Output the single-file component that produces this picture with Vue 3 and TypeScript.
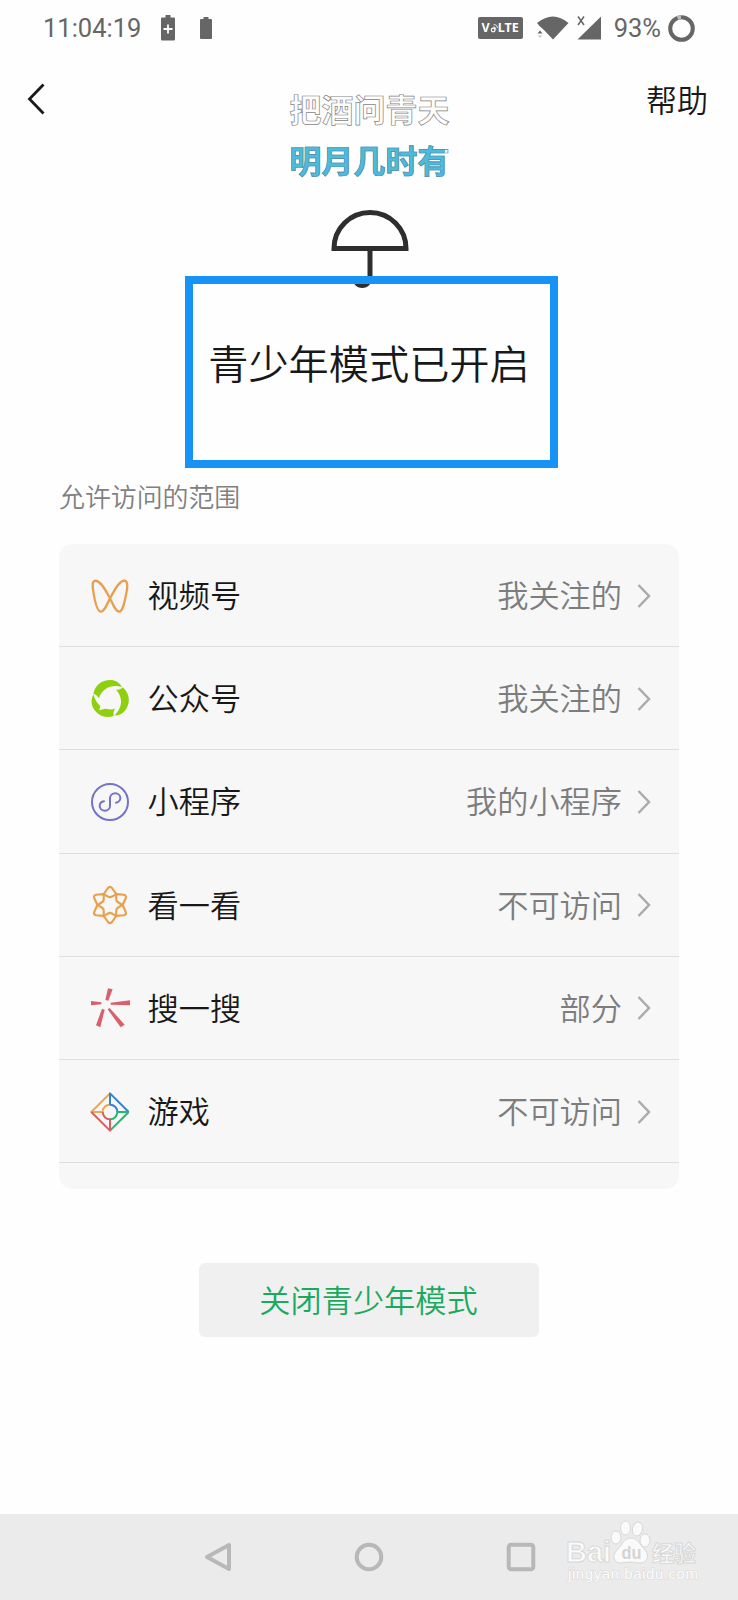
<script setup lang="ts">
type IconName = 'channels' | 'accounts' | 'mini' | 'look' | 'search' | 'games'

interface AccessRow {
  icon: IconName
  label: string
  value: string
}

const rows: AccessRow[] = [
  { icon: 'channels', label: '视频号', value: '我关注的' },
  { icon: 'accounts', label: '公众号', value: '我关注的' },
  { icon: 'mini', label: '小程序', value: '我的小程序' },
  { icon: 'look', label: '看一看', value: '不可访问' },
  { icon: 'search', label: '搜一搜', value: '部分' },
  { icon: 'games', label: '游戏', value: '不可访问' },
]

const sixth = [0, 60, 120, 180, 240, 300]
const third = [0, 120, 240]
</script>

<template>
  <div class="screen">
    <div class="status">
      <span class="clock">11:04:19</span>
      <svg class="bat-plus" viewBox="0 0 14 26" width="14" height="26">
        <path d="M4.500 0h5v2.500H13a1 1 0 0 1 1 1V24.500a1 1 0 0 1-1 1H1a1 1 0 0 1-1-1V3.500a1 1 0 0 1 1-1h3.500z" fill="#666" />
        <path d="M7 9.500v9M2.500 14h9" stroke="#fff" stroke-width="1.800" />
      </svg>
      <svg class="bat" viewBox="0 0 12 22" width="12" height="22">
        <path d="M3.500 0h5v2H11a1 1 0 0 1 1 1V21a1 1 0 0 1-1 1H1a1 1 0 0 1-1-1V3a1 1 0 0 1 1-1h2.500z" fill="#666" />
      </svg>
      <span class="spacer"></span>
      <span class="volte">V<svg viewBox="0 0 10 12" width="8" height="12"><circle cx="4" cy="8.500" r="2.300" fill="none" stroke="#fff" stroke-width="1.600" /><path d="M4 4.500Q7 4.500 7.500 8M4.500 1.500Q9 1.500 9.500 6" fill="none" stroke="#fff" stroke-width="1.100" /></svg>LTE</span>
      <svg class="wifi" viewBox="0 0 32 24" width="32" height="24">
        <path d="M0 7Q16-6 31.500 7L16 23.500L7.500 14.500L3 10.500z" fill="#666" />
        <path d="M-.500 18V13L3 11L7 15V18z" fill="#fefefe" />
        <path d="M.500 17.500L3 14.500L5.500 17.500z" fill="#666" />
        <path d="M.500 19.500L3 22L5.500 19.500z" fill="#ccc" />
      </svg>
      <svg class="signal" viewBox="0 0 24 24" width="24" height="24">
        <path d="M24 .500V23.500H.500z" fill="#666" />
        <path d="M1 .500L7 9M7 .500L1 9" stroke="#666" stroke-width="1.500" />
      </svg>
      <span class="percent">93%</span>
      <svg class="ring" viewBox="0 0 27 27" width="27" height="27">
        <circle cx="13.500" cy="13.500" r="11.300" fill="none" stroke="#666" stroke-width="4" />
        <path d="M9.500 2.900A11.300 11.300 0 0 1 13 2.200" fill="none" stroke="#bbb" stroke-width="4" />
      </svg>
    </div>

    <header class="top">
      <svg class="back" viewBox="0 0 18 32" width="18" height="32">
        <path d="M16.500 1.500L2.500 16L16.500 30.500" fill="none" stroke="#1a1a1a" stroke-width="2.800" />
      </svg>
      <div class="lyrics">
        <div class="line plain">把酒问青天</div>
        <div class="line sung">明月几时有</div>
      </div>
      <span class="help">帮助</span>
    </header>

    <section class="hero">
      <svg class="umbrella" viewBox="0 0 78 80" width="78" height="80">
        <path d="M3 39.500A36 36 0 0 1 75 39.500z" fill="none" stroke="#2e2e2e" stroke-width="5" />
        <path d="M39 42V68A7.750 8.500 0 0 1 23.500 68" fill="none" stroke="#2e2e2e" stroke-width="5" />
      </svg>
      <div class="frame"><h1>青少年模式已开启</h1></div>
    </section>

    <p class="caption">允许访问的范围</p>

    <div class="card">
      <div v-for="row in rows" :key="row.label" class="row">
        <svg class="icon" viewBox="0 0 120 120" width="40" height="40">
          <g v-if="row.icon === 'channels'" fill="none" stroke="#e8a04e" stroke-width="7" stroke-linejoin="round">
            <path d="M60 67C49 47 34 16 17 14C7 14 7 26 9 40C13 68 20 107 33 107C43 107 51 85 60 67C71 47 86 16 102 14C112 14 113 26 111 40C106 68 100 107 87 107C77 107 69 85 60 67z" />
          </g>
          <g v-else-if="row.icon === 'accounts'" fill="#8fd00e">
            <path v-for="a in third" :key="a" d="M10 44C16 18 36 3 60 3C76 3 89 11 96 24C66 14 36 27 27 58C23 51 18 47 10 44z" :transform="`rotate(${a} 60 60)`" />
            <path d="M33 72L28 94L50 88z" fill="#f7f7f7" />
          </g>
          <g v-else-if="row.icon === 'mini'" fill="none" stroke="#7572c9" stroke-width="6" stroke-linecap="round">
            <circle cx="60" cy="60" r="54" />
            <path d="M78 62C86 61 91 54 91 48C91 40 84 34 76 34C67 34 60 40 60 49V71C60 80 53 86 45 86C36 86 29 80 29 72C29 65 34 59 42 58" />
          </g>
          <g v-else-if="row.icon === 'look'" fill="none" stroke="#e9a04c" stroke-width="6.500" stroke-linejoin="round">
            <path v-for="a in sixth" :key="a" d="M42 26L54 9Q60 2 66 9L78 26Q76 31 60 37Q44 31 42 26z" :transform="`rotate(${a} 60 60)`" />
          </g>
          <g v-else-if="row.icon === 'search'" fill="#d9606a">
            <path d="M54 1L68 4L55 38L46 36z" />
            <path d="M3 39L34 43V49L3 52z" />
            <path d="M62 44L120 37V52L62 50z" />
            <path d="M36 62L44 65L31 118L18 112z" />
            <path d="M53 64L59 60L104 110L92 118z" />
          </g>
          <g v-else fill="none" stroke-width="6" stroke-linejoin="round">
            <path d="M60 4L4 60H38A22 22 0 0 1 60 38" stroke="#e8a850" />
            <path d="M60 38V4L116 60M60 38A22 22 0 0 1 82 60" stroke="#3482cf" />
            <path d="M116 60L60 116M60 82A22 22 0 0 0 82 60H116" stroke="#25b76e" />
            <path d="M4 60L60 116V82A22 22 0 0 1 38 60" stroke="#dc5c61" />
          </g>
        </svg>
        <span class="label">{{ row.label }}</span>
        <span class="value">{{ row.value }}</span>
        <svg class="chev" viewBox="0 0 14 26" width="14" height="26">
          <path d="M1.500 2L12 13L1.500 24" fill="none" stroke="#ababab" stroke-width="2.500" />
        </svg>
      </div>
    </div>

    <button class="close" type="button">关闭青少年模式</button>

    <nav class="nav">
      <svg viewBox="0 0 30 30" width="30" height="30">
        <path d="M26 3V27L4 15z" fill="none" stroke="#b8b8b8" stroke-width="4" stroke-linejoin="round" />
      </svg>
      <svg viewBox="0 0 30 30" width="30" height="30">
        <circle cx="15" cy="15" r="12.300" fill="none" stroke="#b8b8b8" stroke-width="4" />
      </svg>
      <svg viewBox="0 0 30 30" width="30" height="30">
        <rect x="2.700" y="2.700" width="24.600" height="24.600" rx="2.500" fill="none" stroke="#b8b8b8" stroke-width="4" />
      </svg>
      <svg class="mark" viewBox="0 0 140 70" width="140" height="70">
        <g fill="#fafafa" stroke="#d8d8d8" stroke-width="1">
          <ellipse cx="50" cy="20.500" rx="5" ry="6.500" />
          <ellipse cx="59.500" cy="11" rx="5" ry="7" />
          <ellipse cx="71.500" cy="12" rx="5" ry="7" transform="rotate(12 71.500 12)" />
          <ellipse cx="79" cy="23.500" rx="5" ry="6.500" />
          <path d="M65 21C72 21 74 28 79 33C84 39 81 46 74 46C70 46 68 45 65 45C61 45 58 46 54 46C47 46 46 38 51 33C56 28 58 21 65 21z" />
          <text class="bai" x="0" y="45" textLength="45" lengthAdjust="spacingAndGlyphs">Bai</text>
          <text class="jy" x="86" y="43.500" textLength="44">经验</text>
        </g>
        <text class="du" x="55.500" y="42" textLength="20" lengthAdjust="spacingAndGlyphs">du</text>
        <text class="url" x="2" y="62" textLength="130">jingyan.baidu.com</text>
      </svg>
    </nav>
  </div>
</template>

<style>
body {
  margin: 0;
  background: #fefefe;
}
</style>

<style scoped>
.screen {
  display: flex;
  flex-direction: column;
  position: relative;
  width: 738px;
  height: 1600px;
  overflow: hidden;
  background: #fefefe;
  color: #181818;
  font-family: 'Noto Sans CJK SC', sans-serif;
  font-weight: 350;
}
.status {
  display: flex;
  align-items: center;
  height: 56px;
  padding: 0 43px 0 43px;
  box-sizing: border-box;
  color: #666;
}
.clock,
.percent {
  font: 25.5px/56px Roboto, sans-serif;
}
.bat-plus {
  margin-left: 20px;
}
.bat {
  margin-left: 25px;
}
.spacer {
  flex: 1;
}
.volte {
  display: flex;
  align-items: center;
  justify-content: center;
  width: 45px;
  height: 22px;
  border-radius: 2px;
  background: #666;
  color: #fff;
  font: bold 12.500px/22px 'Noto Sans', sans-serif;
}
.wifi {
  margin-left: 14px;
}
.signal {
  margin-left: 8px;
}
.percent {
  margin-left: 13px;
}
.ring {
  margin-left: 7px;
}
.top {
  display: grid;
  grid-template-columns: 1fr auto 1fr;
  align-items: start;
  height: 152px;
  padding: 0 30px 0 27px;
}
.back {
  margin-top: 27px;
}
.lyrics {
  margin: 27px -2px 0 2px;
}
.line {
  font-weight: 700;
  font-size: 32px;
  line-height: 51px;
  -webkit-text-stroke: 0.7px #858585;
}
.plain {
  color: #fefefe;
}
.sung {
  color: transparent;
  background: linear-gradient(90deg, #4bbbe0 97%, #fefefe 97%);
  background-clip: text;
  -webkit-background-clip: text;
  -webkit-text-stroke: 0.7px #578c9c;
}
.help {
  justify-self: end;
  margin-top: 21px;
  font-size: 31px;
  line-height: 44px;
}
.hero {
  display: flex;
  flex-direction: column;
  align-items: center;
  height: 260px;
}
.umbrella {
  flex: none;
  margin: 1px 0 -13px 2px;
}
.frame {
  position: relative;
  width: 373px;
  height: 192px;
  margin-left: 4px;
  box-sizing: border-box;
  border: 8.500px solid #1693f5;
  text-align: center;
}
h1 {
  margin: 56px -10px 0 -14px;
  font-size: 40.200px;
  line-height: 44px;
  font-weight: 350;
  white-space: nowrap;
}
.caption {
  margin: 9px 0 0 59px;
  font-size: 25.900px;
  line-height: 38px;
  color: #808080;
}
.card {
  width: 620px;
  height: 645px;
  margin: 29px 0 0 59px;
  border-radius: 14px;
  background: #f7f7f7;
}
.row {
  display: flex;
  align-items: center;
  height: 103.200px;
  padding: 1px 28px 0 31px;
  box-sizing: border-box;
  border-bottom: 1px solid #dedede;
}
.icon {
  margin-right: -0.500px;
}
.label,
.value {
  font-size: 31.200px;
  line-height: 44px;
  margin-top: -3px;
}
.label {
  flex: 1;
  margin-left: 18px;
}
.value {
  color: #7d7d7d;
}
.chev {
  margin-left: 15px;
}
.close {
  width: 340px;
  height: 74px;
  margin: 74px 0 0 199px;
  padding: 0 1px 2px 0;
  border: 0;
  border-radius: 6px;
  background: #f0f0f0;
  color: #1aaa5d;
  font: 350 31.200px/44px 'Noto Sans CJK SC', sans-serif;
}
.nav {
  display: flex;
  align-items: center;
  gap: 121.500px;
  position: relative;
  height: 86px;
  margin-top: auto;
  padding-left: 202.500px;
  background: #ebebeb;
}
.mark {
  position: absolute;
  left: 566px;
  top: 3px;
  overflow: visible;
}
.bai {
  font: bold 30px 'Liberation Sans', sans-serif;
}
.du {
  font: bold 19px 'Liberation Sans', sans-serif;
  fill: #d4d4d4;
}
.jy {
  font: bold 22px 'Noto Sans CJK SC', sans-serif;
}
.url {
  font: 15px 'Liberation Sans', sans-serif;
  fill: #fdfdfd;
  stroke: #d8d8d8;
  stroke-width: 1px;
  paint-order: stroke;
}
</style>
